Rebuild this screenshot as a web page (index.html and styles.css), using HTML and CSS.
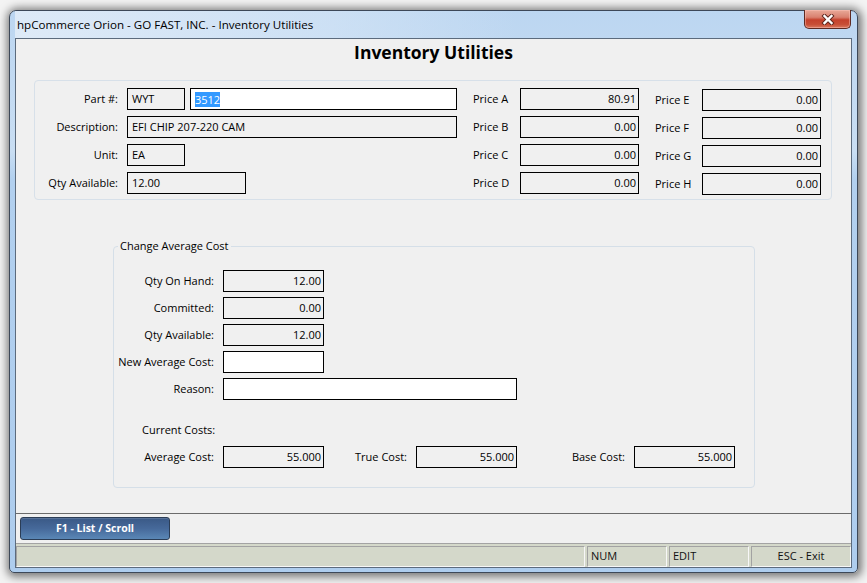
FILE: index.html
```html
<!DOCTYPE html>
<html lang="en">
<head>
<meta charset="utf-8">
<title>Inventory Utilities</title>
<link rel="stylesheet" href="styles.css">
</head>
<body>
<div class="window">
  <div class="titlebar">
    <span class="title">hpCommerce Orion - GO FAST, INC. - Inventory Utilities</span>
    <button class="close" type="button" aria-label="Close">
      <svg width="14" height="11" viewBox="0 0 14 11">
        <path d="M3.5 2 L10.5 9 M10.5 2 L3.5 9" stroke="#5b241b" stroke-width="4.2" stroke-linecap="square" fill="none"/>
        <path d="M3.5 2 L10.5 9 M10.5 2 L3.5 9" stroke="#ffffff" stroke-width="2.4" stroke-linecap="square" fill="none"/>
      </svg>
    </button>
  </div>
  <div class="client">
    <main class="main">
      <h1 class="heading">Inventory Utilities</h1>

      <section class="part-box">
        <div class="part-grid">
          <span class="lbl">Part #:</span>
          <div class="pair">
            <div class="fld w58">WYT</div>
            <div class="fld white w267"><span class="sel">3512</span></div>
          </div>
          <span class="lbl">Description:</span>
          <div class="fld w330">EFI CHIP 207-220 CAM</div>
          <span class="lbl">Unit:</span>
          <div class="fld w58">EA</div>
          <span class="lbl">Qty Available:</span>
          <div class="fld w119">12.00</div>
        </div>

        <div class="price-grid">
          <span class="plbl">Price A</span><div class="fld num">80.91</div>
          <span class="plbl">Price B</span><div class="fld num">0.00</div>
          <span class="plbl">Price C</span><div class="fld num">0.00</div>
          <span class="plbl">Price D</span><div class="fld num">0.00</div>
        </div>

        <div class="price-grid lower">
          <span class="plbl">Price E</span><div class="fld num">0.00</div>
          <span class="plbl">Price F</span><div class="fld num">0.00</div>
          <span class="plbl">Price G</span><div class="fld num">0.00</div>
          <span class="plbl">Price H</span><div class="fld num">0.00</div>
        </div>
      </section>

      <fieldset class="cost-box">
        <legend class="legend">Change Average Cost</legend>
        <div class="cost-grid">
          <span class="lbl">Qty On Hand:</span>
          <div class="fld num w101">12.00</div>
          <span class="lbl">Committed:</span>
          <div class="fld num w101">0.00</div>
          <span class="lbl">Qty Available:</span>
          <div class="fld num w101">12.00</div>
          <span class="lbl">New Average Cost:</span>
          <div class="fld white w101"></div>
          <span class="lbl">Reason:</span>
          <div class="fld white w294"></div>
        </div>
        <div class="current-label">Current Costs:</div>
        <div class="cost-row">
          <span class="lbl c1">Average Cost:</span>
          <div class="fld num w101">55.000</div>
          <span class="lbl c2">True Cost:</span>
          <div class="fld num w101">55.000</div>
          <span class="lbl c3">Base Cost:</span>
          <div class="fld num w101">55.000</div>
        </div>
      </fieldset>
    </main>

    <div class="actions">
      <button class="f1" type="button">F1 - List / Scroll</button>
    </div>

    <div class="status">
      <div class="panel grow"></div>
      <div class="panel p80">NUM</div>
      <div class="panel p80">EDIT</div>
      <div class="panel p100 center">ESC - Exit</div>
    </div>
  </div>
</div>
</body>
</html>
```

FILE: styles.css
```css
* {
  box-sizing: border-box;
}

html, body {
  margin: 0;
  padding: 0;
}

body {
  width: 867px;
  height: 583px;
  overflow: hidden;
  background: #f3f3f3;
  font-family: "Open Sans", "Noto Sans", sans-serif;
  font-size: 11px;
  color: #000;
  padding-top: 10px;
  padding-left: 9px;
}

.window {
  width: 849px;
  height: 563px;
  border: 1px solid #3d4858;
  border-radius: 7px 7px 5px 5px;
  background: linear-gradient(to bottom, #bcd6f1 0, #c9def3 25%, #b2d0ef 30%, #aecdee 100%);
  padding: 0 5px 5px;
  display: flex;
  flex-direction: column;
  box-shadow: 1px 1px 9px 3px rgba(0, 0, 0, 0.5);
}

.titlebar {
  height: 27px;
  flex: none;
  display: flex;
  align-items: center;
  justify-content: space-between;
  padding-left: 2px;
  background: linear-gradient(to right, rgba(225, 236, 248, 0.9) 0, rgba(214, 230, 246, 0.6) 38%, rgba(174, 205, 239, 0) 60%);
}

.title {
  font-size: 11.6px;
  line-height: 16px;
  color: #000;
}

.close {
  align-self: flex-start;
  margin-top: -1px;
  margin-right: 1px;
  width: 47px;
  height: 19px;
  padding: 0;
  border: 1px solid #5e2a22;
  border-top: none;
  border-radius: 0 0 5px 5px;
  background: linear-gradient(to bottom, #e9a998 0, #d98170 40%, #c5412c 55%, #c84e36 80%, #d9785e 100%);
  display: flex;
  align-items: center;
  justify-content: center;
  box-shadow: inset 0 0 0 1px rgba(255, 200, 190, 0.45);
}

.close svg {
  display: block;
}

.client {
  height: 530px;
  flex: none;
  border: 1px solid #5c6b7d;
  background: #f0f0f0;
  display: flex;
  flex-direction: column;
}

.main {
  height: 474px;
  flex: none;
}

.heading {
  margin: 0;
  height: 27px;
  line-height: 27px;
  text-align: center;
  font-size: 17.5px;
  font-weight: 700;
}

/* Top group */
.part-box {
  margin: 14px 0 0 18px;
  width: 798px;
  height: 120px;
  border: 1px solid #d7e0e9;
  border-radius: 4px;
  padding-top: 7px;
  display: flex;
  align-items: flex-start;
}

.part-grid {
  display: grid;
  grid-template-columns: 83px auto;
  column-gap: 9px;
  row-gap: 6px;
  justify-items: start;
}

.lbl {
  justify-self: stretch;
  text-align: right;
  line-height: 22px;
  white-space: nowrap;
}

.plbl {
  line-height: 22px;
  white-space: nowrap;
}

.fld {
  height: 22px;
  border: 1px solid #000;
  line-height: 20px;
  padding: 0 4px;
  white-space: nowrap;
  overflow: hidden;
  background: #f0f0f0;
}

.fld.white {
  background: #fff;
}

.fld.num {
  text-align: right;
  padding: 0 2px 0 4px;
}

.pair {
  display: flex;
  gap: 5px;
}

.w58 { width: 58px; }
.w101 { width: 101px; }
.w119 { width: 119px; }
.w267 { width: 267px; }
.w294 { width: 294px; }
.w330 { width: 330px; }

.sel {
  display: inline-block;
  line-height: 15px;
  background: #3399ff;
  color: #fff;
  vertical-align: middle;
  margin-top: -2px;
}

.price-grid {
  margin-left: 16px;
  display: grid;
  grid-template-columns: 47px 119px;
  row-gap: 6px;
}

.price-grid.lower {
  margin-top: 1px;
}

/* Change Average Cost group */
.cost-box {
  margin: 38px 0 0 97px;
  width: 642px;
  border: 1px solid #d5dfe8;
  border-radius: 4px;
  padding: 0 0 19px 0;
  min-inline-size: 0;
}

.legend {
  margin-left: 4px;
  padding: 0 2px;
  line-height: 16px;
}

.cost-grid {
  margin-top: 16px;
  display: grid;
  grid-template-columns: 100px auto;
  column-gap: 9px;
  row-gap: 5px;
  justify-items: start;
}

.current-label {
  margin: 22px 0 0 28px;
  line-height: 16px;
}

.cost-row {
  margin-top: 8px;
  display: flex;
  gap: 9px;
  align-items: center;
}

.cost-row .c1 { width: 100px; }
.cost-row .c2 { width: 74px; }
.cost-row .c3 { width: 99px; }

/* Bottom button bar */
.actions {
  height: 31px;
  flex: none;
  border-top: 1px solid #6b6b6b;
  border-bottom: 1px solid #a3a3a3;
  padding: 3px 0 0 4px;
}

.f1 {
  display: block;
  width: 150px;
  height: 23px;
  padding: 0;
  border: 1px solid #2b3d56;
  border-radius: 3px;
  background: linear-gradient(to bottom, #3a5986 0, #46699a 50%, #5a87b6 100%);
  color: #fff;
  font-family: "Open Sans", "Noto Sans", sans-serif;
  font-size: 10.5px;
  font-weight: 700;
  line-height: 21px;
  box-shadow: inset 0 1px 0 rgba(255, 255, 255, 0.15);
}

/* Status bar */
.status {
  height: 23px;
  flex: none;
  display: flex;
  gap: 2px;
  background: #d4d8ca;
  padding-top: 2px;
}

.panel {
  border: 1px solid;
  border-color: #a2a2a2 #f7f7f7 #f7f7f7 #a2a2a2;
  line-height: 18px;
  padding-left: 3px;
  color: #111;
  white-space: nowrap;
}

.panel.grow { flex: 1; }
.panel.p80 { width: 80px; }
.panel.p100 { width: 100px; }
.panel.center { text-align: center; padding-left: 0; }
```
